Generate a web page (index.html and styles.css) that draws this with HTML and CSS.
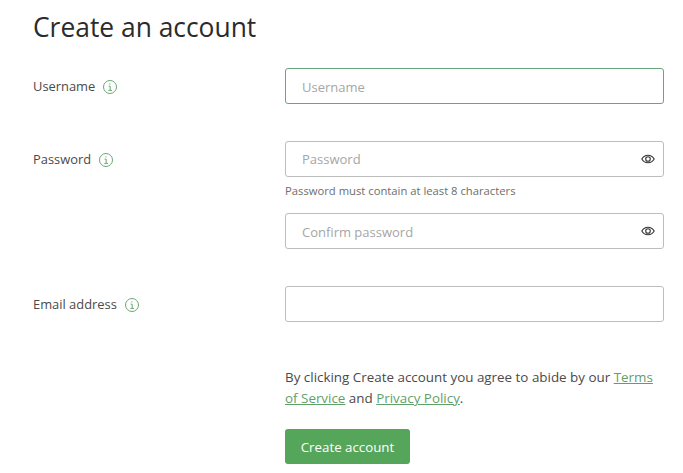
FILE: index.html
```html
<!DOCTYPE html>
<html lang="en">
  <head>
    <meta charset="UTF-8" />
    <meta name="viewport" content="width=device-width, initial-scale=1.0" />
    <title>Create an account</title>
    <link rel="stylesheet" href="styles.css">
  </head>
  <body>
    <form class="signup">
      <h1 class="title">Create an account</h1>

      <div class="row">
        <label class="label">
          Username
          <svg class="info" viewBox="0 0 16 16" fill="none" stroke="currentColor" stroke-width="1">
            <circle cx="8" cy="8" r="6.5" />
            <path d="M6.6 7.2H8.2V11.4M6.4 11.4H10" />
            <circle cx="7.9" cy="4.9" r="0.6" fill="currentColor" stroke="none" />
          </svg>
        </label>
        <div class="fields">
          <input class="input active" type="text" placeholder="Username" />
        </div>
      </div>

      <div class="row">
        <label class="label">
          Password
          <svg class="info" viewBox="0 0 16 16" fill="none" stroke="currentColor" stroke-width="1">
            <circle cx="8" cy="8" r="6.5" />
            <path d="M6.6 7.2H8.2V11.4M6.4 11.4H10" />
            <circle cx="7.9" cy="4.9" r="0.6" fill="currentColor" stroke="none" />
          </svg>
        </label>
        <div class="fields">
          <div class="secret">
            <input class="input" type="password" placeholder="Password" />
            <svg class="eye" viewBox="0 0 14 10" fill="none" stroke="currentColor" stroke-width="1.1">
              <path d="M0.8 5C2.2 2.6 4.4 1.2 7 1.2S11.8 2.6 13.2 5C11.8 7.4 9.6 8.8 7 8.8S2.2 7.4 0.8 5Z" />
              <circle cx="7" cy="5" r="2.3" />
            </svg>
          </div>
          <p class="hint">Password must contain at least 8 characters</p>
          <div class="secret">
            <input class="input" type="password" placeholder="Confirm password" />
            <svg class="eye" viewBox="0 0 14 10" fill="none" stroke="currentColor" stroke-width="1.1">
              <path d="M0.8 5C2.2 2.6 4.4 1.2 7 1.2S11.8 2.6 13.2 5C11.8 7.4 9.6 8.8 7 8.8S2.2 7.4 0.8 5Z" />
              <circle cx="7" cy="5" r="2.3" />
            </svg>
          </div>
        </div>
      </div>

      <div class="row">
        <label class="label">
          Email address
          <svg class="info" viewBox="0 0 16 16" fill="none" stroke="currentColor" stroke-width="1">
            <circle cx="8" cy="8" r="6.5" />
            <path d="M6.6 7.2H8.2V11.4M6.4 11.4H10" />
            <circle cx="7.9" cy="4.9" r="0.6" fill="currentColor" stroke="none" />
          </svg>
        </label>
        <div class="fields">
          <input class="input" type="email" />
        </div>
      </div>

      <div class="row terms-row">
        <div></div>
        <div class="fields">
          <p class="terms">
            By clicking Create account you agree to abide by our
            <a href="#">Terms of Service</a> and <a href="#">Privacy Policy</a>.
          </p>
          <button class="submit" type="button">Create account</button>
        </div>
      </div>
    </form>
  </body>
</html>
```

FILE: styles.css
```css
* {
  box-sizing: border-box;
}

body {
  margin: 0;
  background: #fff;
  color: #333;
  font-family: "Open Sans", "Noto Sans", sans-serif;
  font-size: 13px;
}

.signup {
  padding: 9px 19px 0 33px;
}

.title {
  margin: 0 0 22px;
  font-size: 26.4px;
  line-height: 37px;
  font-weight: 400;
  color: #2b2b2b;
}

.row {
  display: grid;
  grid-template-columns: 252px 379px;
  margin-bottom: 37px;
}

.label {
  display: flex;
  align-items: center;
  gap: 7px;
  height: 36px;
  font-size: 12.9px;
  color: #4a4a4a;
}

.info {
  width: 16px;
  height: 16px;
  margin-top: 1px;
  color: #6aa873;
}

.input {
  display: block;
  width: 100%;
  height: 36px;
  padding: 1px 16px 0;
  border: 1px solid #bdbdbd;
  border-radius: 3px;
  background: #fff;
  font: inherit;
  color: #333;
}

.input::placeholder {
  color: #a6a6a6;
  opacity: 1;
}

.input.active {
  border-color: #6aa67c;
}

.secret {
  position: relative;
}

.secret:first-child .input {
  padding-top: 0;
}

.eye {
  position: absolute;
  top: 13px;
  right: 9px;
  width: 14px;
  height: 10px;
  color: #333;
}

.hint {
  margin: 6px 0 14px;
  font-size: 11.25px;
  line-height: 16px;
  color: #6e6e6e;
}

.terms-row {
  margin: 0;
  padding-top: 8px;
}

.terms {
  margin: 0 0 20px;
  font-size: 13.4px;
  line-height: 21px;
  color: #4a4a4a;
}

.terms a {
  color: #5f9f68;
}

.submit {
  display: block;
  width: 125px;
  height: 35px;
  border: none;
  border-radius: 3px;
  background: #55a65b;
  color: #fff;
  font: inherit;
  font-size: 13.3px;
}
```
